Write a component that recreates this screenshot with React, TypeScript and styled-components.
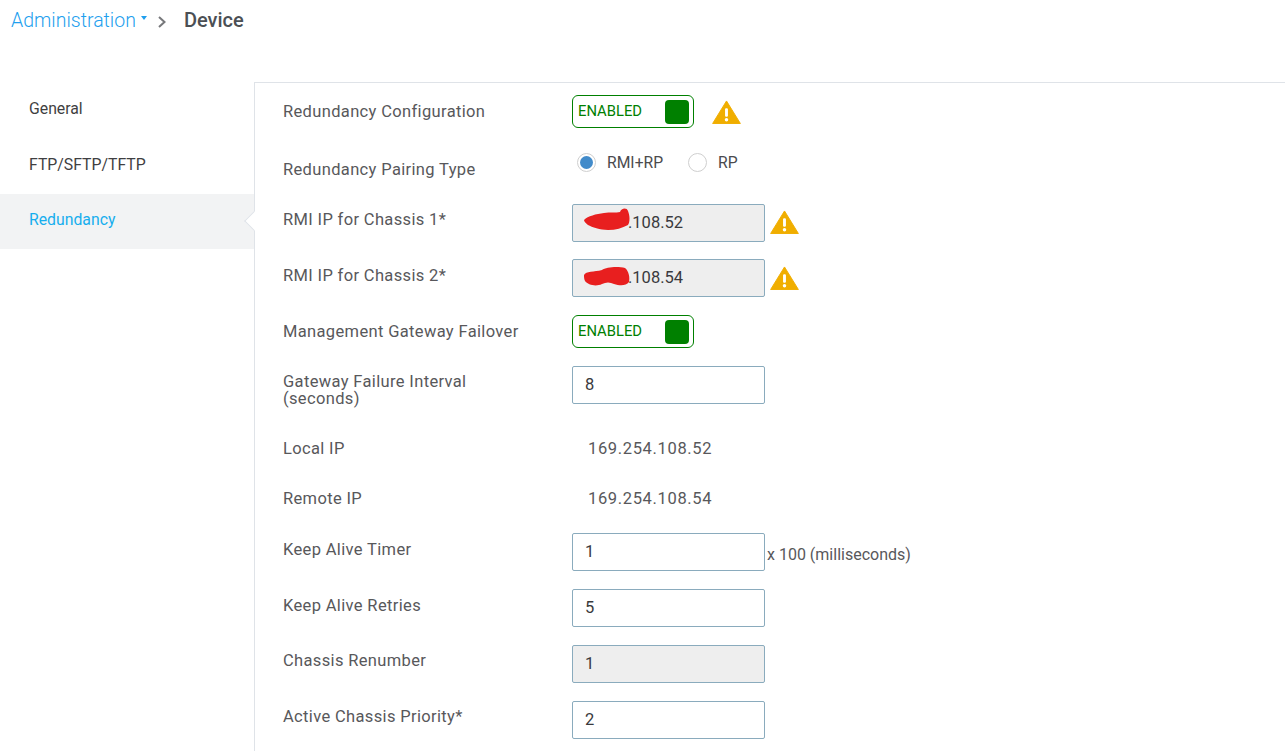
import styled, { createGlobalStyle } from "styled-components";

const GlobalStyle = createGlobalStyle`
  html, body {
    margin: 0;
    padding: 0;
    height: 100%;
    overflow: hidden;
    background: #fff;
  }
  body {
    font-family: "Roboto", "Liberation Sans", sans-serif;
    color: #58585b;
  }
`;

function WarningIcon({ size }: { size: number }) {
  return (
    <svg width={size} height={size * 0.83} viewBox="0 0 30 25">
      <path d="M15 1 L29.4 24.4 L0.6 24.4 Z" fill="#f0ae00" stroke="#f0ae00" strokeLinejoin="round" />
      <rect x="13.5" y="8.5" width="3" height="9" rx="1.2" fill="#fff" />
      <circle cx="15" cy="20.5" r="1.8" fill="#fff" />
    </svg>
  );
}

function Scribble({ d }: { d: string }) {
  return (
    <ScribbleSvg width="50" height="26" viewBox="0 0 50 26">
      <path d={d} fill="#e81f1f" />
    </ScribbleSvg>
  );
}

function Toggle() {
  return (
    <ToggleBox>
      <ToggleText>ENABLED</ToggleText>
      <ToggleKnob />
    </ToggleBox>
  );
}

export default function App() {
  return (
    <>
      <GlobalStyle />
      <Page>
        <Header>
          <Crumb>Administration</Crumb>
          <Caret />
          <Chevron width="10" height="14" viewBox="0 0 10 14">
            <path d="M2 2 L7.5 7 L2 12" fill="none" stroke="#77787b" strokeWidth="2" />
          </Chevron>
          <Title>Device</Title>
        </Header>
        <Body>
          <Sidebar>
            <NavItem>General</NavItem>
            <NavItem>FTP/SFTP/TFTP</NavItem>
            <NavItem $active>Redundancy</NavItem>
          </Sidebar>
          <Content>
            <Row $mb={22}>
              <Label $top={7}>Redundancy Configuration</Label>
              <Toggle />
              <WarnSlot $left={18} $top={5}>
                <WarningIcon size={29} />
              </WarnSlot>
            </Row>
            <Row $mb={26} $height={28}>
              <Label $top={10}>Redundancy Pairing Type</Label>
              <RadioGroup>
                <RadioOuter>
                  <RadioDot />
                </RadioOuter>
                <RadioLabel>RMI+RP</RadioLabel>
                <RadioOuter />
                <RadioLabel>RP</RadioLabel>
              </RadioGroup>
            </Row>
            <Row $mb={17}>
              <Label $top={6}>RMI IP for Chassis 1*</Label>
              <Field $disabled $redacted>
                .108.52
                <Scribble d="M0 12 C4 8 12 6 20 5 C26 4 32 5 36 4 C37 0 43 -1 44 3 C46 8 46 14 44 17 C38 20 32 22 24 22 C16 22 8 19 4 17 C2 15 0 14 0 12 Z" />
              </Field>
              <WarnSlot $left={5} $top={6}>
                <WarningIcon size={29} />
              </WarnSlot>
            </Row>
            <Row $mb={18}>
              <Label $top={7}>RMI IP for Chassis 2*</Label>
              <Field $disabled $redacted>
                .108.54
                <Scribble d="M0 12 C2 8 10 9 18 7 C22 4 34 3 41 5 C45 8 46 15 45 19 C42 23 36 23 30 21 C26 19 22 19 18 21 C12 24 4 22 1 18 C0 16 0 14 0 12 Z" />
              </Field>
              <WarnSlot $left={5} $top={7}>
                <WarningIcon size={29} />
              </WarnSlot>
            </Row>
            <Row $mb={18}>
              <Label $top={7}>Management Gateway Failover</Label>
              <Toggle />
            </Row>
            <Row $mb={32}>
              <Label $top={7} $tight>
                Gateway Failure Interval
                <br />
                (seconds)
              </Label>
              <Field>8</Field>
            </Row>
            <Row $mb={30} $height={20}>
              <Label $top={0}>Local IP</Label>
              <StaticValue>169.254.108.52</StaticValue>
            </Row>
            <Row $mb={24} $height={20}>
              <Label $top={0}>Remote IP</Label>
              <StaticValue>169.254.108.54</StaticValue>
            </Row>
            <Row $mb={18}>
              <Label $top={7}>Keep Alive Timer</Label>
              <Field>1</Field>
              <Unit>x 100 (milliseconds)</Unit>
            </Row>
            <Row $mb={18}>
              <Label $top={7}>Keep Alive Retries</Label>
              <Field>5</Field>
            </Row>
            <Row $mb={18}>
              <Label $top={6}>Chassis Renumber</Label>
              <Field $disabled>1</Field>
            </Row>
            <Row $mb={0}>
              <Label $top={6}>Active Chassis Priority*</Label>
              <Field>2</Field>
            </Row>
          </Content>
        </Body>
      </Page>
    </>
  );
}

const Page = styled.div`
  width: 1285px;
  height: 751px;
  overflow: hidden;
  display: flex;
  flex-direction: column;
`;

const Header = styled.div`
  height: 82px;
  box-sizing: border-box;
  padding: 7px 0 0 11px;
  display: flex;
  align-items: flex-start;
`;

const Crumb = styled.span`
  margin-top: 1px;
  color: #1f9fee;
  font-size: 19.5px;
  line-height: 26px;
  font-weight: 300;
`;

const Caret = styled.span`
  width: 0;
  height: 0;
  margin: 9px 0 0 5px;
  border-left: 3.5px solid transparent;
  border-right: 3.5px solid transparent;
  border-top: 4px solid #1f9fee;
`;

const Chevron = styled.svg`
  margin: 8px 0 0 10px;
`;

const Title = styled.span`
  margin-left: 17px;
  color: #4b4f54;
  font-size: 20px;
  line-height: 26px;
  font-weight: 500;
`;

const Body = styled.div`
  flex: 1;
  display: flex;
  min-height: 0;
`;

const Sidebar = styled.div`
  width: 254px;
  flex-shrink: 0;
`;

const NavItem = styled.div<{ $active?: boolean }>`
  position: relative;
  height: ${(p) => (p.$active ? "55px" : "56px")};
  box-sizing: border-box;
  padding: ${(p) => (p.$active ? "16px" : "17px")} 0 0 29px;
  font-size: 15.8px;
  line-height: 20px;
  color: ${(p) => (p.$active ? "#17aeee" : "#3f3f42")};
  background: ${(p) => (p.$active ? "#f2f3f4" : "transparent")};

  ${(p) =>
    p.$active &&
    `
    &::after {
      content: "";
      position: absolute;
      right: -7px;
      top: 20px;
      width: 13px;
      height: 13px;
      background: #fff;
      border-left: 1px solid #dfe3e8;
      border-bottom: 1px solid #dfe3e8;
      transform: rotate(45deg);
    }
  `}
`;

const Content = styled.div`
  flex: 1;
  border-top: 1px solid #dfe3e8;
  border-left: 1px solid #dfe3e8;
  padding: 12px 0 0 28px;
`;

const Row = styled.div<{ $mb: number; $height?: number }>`
  display: flex;
  align-items: flex-start;
  margin-bottom: ${(p) => p.$mb}px;
  ${(p) => p.$height && `height: ${p.$height}px;`}
`;

const Label = styled.div<{ $top: number; $tight?: boolean }>`
  width: 289px;
  flex-shrink: 0;
  margin-top: ${(p) => p.$top}px;
  font-size: 16.5px;
  line-height: ${(p) => (p.$tight ? "17px" : "20px")};
  letter-spacing: 0.35px;
  color: #58585b;
`;

const ToggleBox = styled.div`
  width: 122px;
  height: 33px;
  box-sizing: border-box;
  border: 1px solid #008000;
  border-radius: 6px;
  padding: 0 4px 0 5px;
  display: flex;
  align-items: center;
  justify-content: space-between;
`;

const ToggleText = styled.span`
  color: #008000;
  font-size: 14.8px;
  padding-bottom: 2px;
`;

const ToggleKnob = styled.span`
  width: 24px;
  height: 24px;
  border-radius: 4px;
  background: #008000;
`;

const WarnSlot = styled.div<{ $left: number; $top: number }>`
  margin: ${(p) => p.$top}px 0 0 ${(p) => p.$left}px;
  line-height: 0;
`;

const RadioGroup = styled.div`
  display: flex;
  align-items: center;
  height: 24px;
  padding-left: 5px;
`;

const RadioOuter = styled.span`
  width: 19px;
  height: 19px;
  box-sizing: border-box;
  border: 1px solid #cfcfcf;
  border-radius: 50%;
  display: flex;
  align-items: center;
  justify-content: center;
  background: #fff;
`;

const RadioDot = styled.span`
  width: 13px;
  height: 13px;
  border-radius: 50%;
  background: #428bca;
`;

const RadioLabel = styled.span`
  margin: 0 25px 0 11px;
  font-size: 15.7px;
  color: #4b4b4e;
`;

const Field = styled.div<{ $disabled?: boolean; $redacted?: boolean }>`
  position: relative;
  width: 193px;
  height: 38px;
  box-sizing: border-box;
  flex-shrink: 0;
  border: 1px solid #8aabbd;
  border-radius: 2px;
  padding: 0 0 2px ${(p) => (p.$redacted ? "55px" : "12px")};
  display: flex;
  align-items: center;
  font-size: 16.5px;
  color: #3a3a3d;
  background: ${(p) => (p.$disabled ? "#eeeeee" : "#fff")};
`;

const ScribbleSvg = styled.svg`
  position: absolute;
  left: 11px;
  top: 3px;
`;

const StaticValue = styled.div`
  padding-left: 16px;
  font-size: 16.5px;
  line-height: 20px;
  letter-spacing: 0.65px;
  color: #58585b;
`;

const Unit = styled.div`
  margin: 12px 0 0 2px;
  font-size: 16px;
  line-height: 20px;
  color: #58585b;
`;
